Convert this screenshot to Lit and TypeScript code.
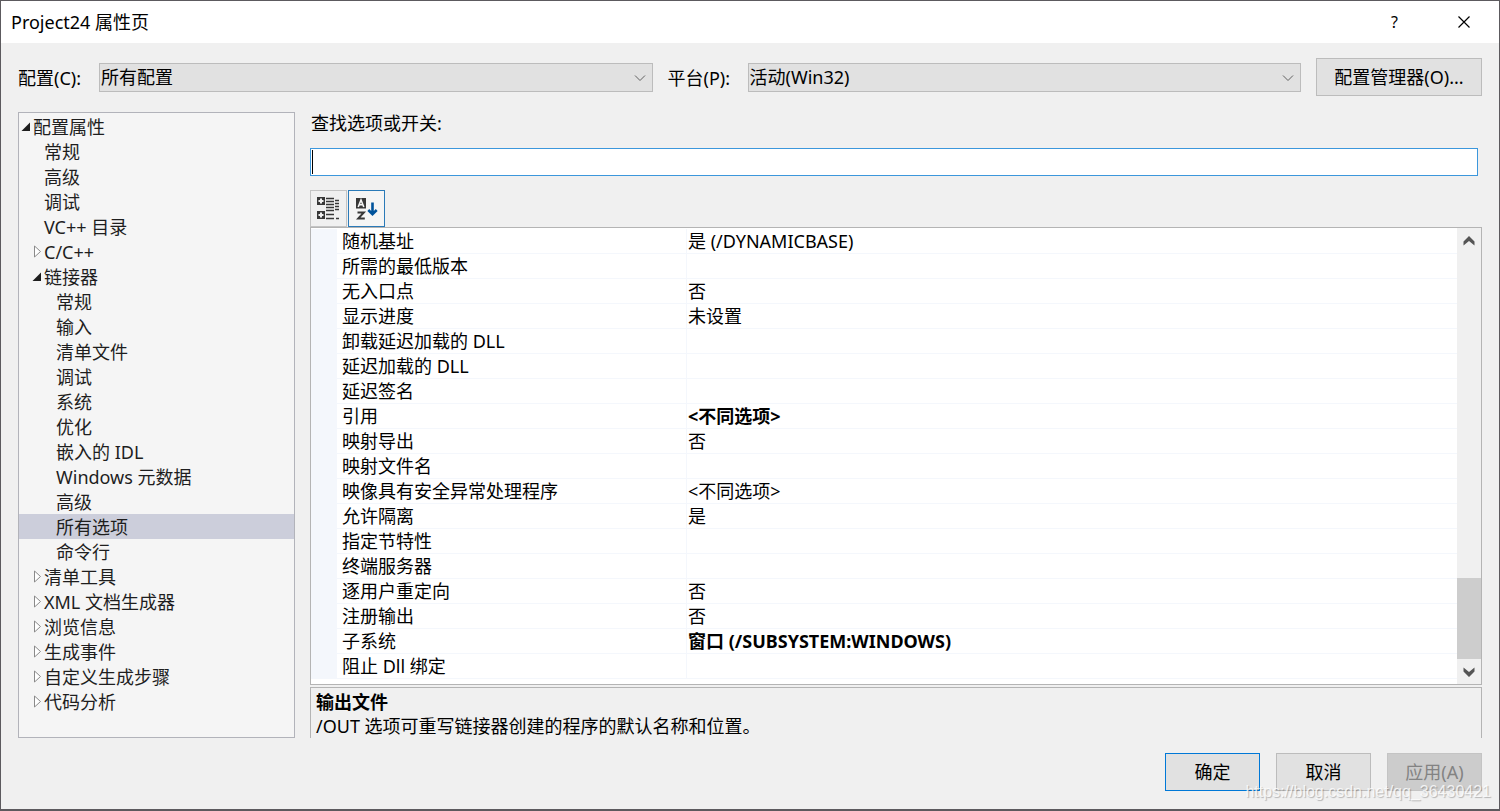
import { LitElement, html, css, svg, nothing } from "lit";
import { customElement, property, state } from "lit/decorators.js";
import { classMap } from "lit/directives/class-map.js";

interface TreeNode {
  label: string;
  children?: TreeNode[];
  open?: boolean;
}

interface Row {
  name: string;
  value: string;
  bold?: boolean;
}

const TREE: TreeNode = {
  label: "配置属性",
  open: true,
  children: [
    { label: "常规" },
    { label: "高级" },
    { label: "调试" },
    { label: "VC++ 目录" },
    { label: "C/C++", children: [] },
    {
      label: "链接器",
      open: true,
      children: [
        { label: "常规" },
        { label: "输入" },
        { label: "清单文件" },
        { label: "调试" },
        { label: "系统" },
        { label: "优化" },
        { label: "嵌入的 IDL" },
        { label: "Windows 元数据" },
        { label: "高级" },
        { label: "所有选项" },
        { label: "命令行" },
      ],
    },
    { label: "清单工具", children: [] },
    { label: "XML 文档生成器", children: [] },
    { label: "浏览信息", children: [] },
    { label: "生成事件", children: [] },
    { label: "自定义生成步骤", children: [] },
    { label: "代码分析", children: [] },
  ],
};

const ROWS: Row[] = [
  { name: "随机基址", value: "是 (/DYNAMICBASE)" },
  { name: "所需的最低版本", value: "" },
  { name: "无入口点", value: "否" },
  { name: "显示进度", value: "未设置" },
  { name: "卸载延迟加载的 DLL", value: "" },
  { name: "延迟加载的 DLL", value: "" },
  { name: "延迟签名", value: "" },
  { name: "引用", value: "<不同选项>", bold: true },
  { name: "映射导出", value: "否" },
  { name: "映射文件名", value: "" },
  { name: "映像具有安全异常处理程序", value: "<不同选项>" },
  { name: "允许隔离", value: "是" },
  { name: "指定节特性", value: "" },
  { name: "终端服务器", value: "" },
  { name: "逐用户重定向", value: "否" },
  { name: "注册输出", value: "否" },
  { name: "子系统", value: "窗口 (/SUBSYSTEM:WINDOWS)", bold: true },
  { name: "阻止 Dll 绑定", value: "" },
];

@customElement("option-tree")
export class OptionTree extends LitElement {
  static styles = css`
    :host {
      display: block;
      box-sizing: border-box;
      padding: 1px 0;
      border: 1px solid #b2b3ba;
      background: #f5f5f5;
    }
    ul {
      list-style: none;
      margin: 0;
      padding: 0;
    }
    .item {
      display: flex;
      align-items: center;
      width: 100%;
      height: 25px;
      padding: 0;
      border: 0;
      background: none;
      color: #1e1e1e;
      font: inherit;
      text-align: left;
      white-space: nowrap;
    }
    .level0 { padding-left: 2px; }
    .level1 { padding-left: 13px; }
    .level2 { padding-left: 25px; }
    .selected { background: #cccedb; }
    .arrow {
      flex: none;
      width: 12px;
      height: 14px;
    }
  `;

  @state() private selected = "链接器/所有选项";

  private arrow(node: TreeNode) {
    const shape = !node.children
      ? nothing
      : node.open
        ? svg`<path d="M9 2.5V11H0.5Z" fill="#1e1e1e" />`
        : svg`<path d="M2.5 1V12L8.5 6.500Z" fill="#fff" stroke="#8a8a8a" />`;
    return html`<svg class="arrow" viewBox="0 0 12 14" aria-hidden="true">${shape}</svg>`;
  }

  private node(node: TreeNode, level: number, parent: string): unknown {
    const key = `${parent}/${node.label}`;
    const isSelected = key === this.selected;
    return html`<li role="treeitem" aria-selected=${isSelected}>
      <button
        class=${classMap({ item: true, [`level${level}`]: true, selected: isSelected })}
        @click=${() => (this.selected = key)}
      >${this.arrow(node)}<span>${node.label}</span></button>
      ${node.open && node.children
        ? html`<ul role="group">${node.children.map((c) => this.node(c, level + 1, node.label))}</ul>`
        : nothing}
    </li>`;
  }

  render() {
    return html`<ul role="tree" aria-label="配置属性">${this.node(TREE, 0, "")}</ul>`;
  }
}

@customElement("combo-box")
export class ComboBox extends LitElement {
  static styles = css`
    :host { display: contents; }
    label { white-space: nowrap; }
    .box {
      display: grid;
      min-width: 0;
      align-items: center;
    }
    select, .chevron { grid-area: 1 / 1; }
    select {
      appearance: none;
      width: 100%;
      height: 29px;
      padding: 0 32px 0 1px;
      border: 1px solid #bcbcbc;
      border-radius: 0;
      background: #e1e1e1;
      color: #000;
      font: inherit;
      line-height: 27px;
    }
    .chevron {
      justify-self: end;
      width: 12px;
      height: 8px;
      margin-right: 7px;
      pointer-events: none;
    }
    label, .box { margin-top: 1px; }
  `;

  @property() label = "";
  @property() value = "";

  render() {
    return html`<label for="field">${this.label}</label>
      <div class="box">
        <select id="field"><option>${this.value}</option></select>
        <svg class="chevron" viewBox="0 0 12 8" aria-hidden="true">
          <path d="M1 1.5L6 6.5L11 1.5" fill="none" stroke="#606060" />
        </svg>
      </div>`;
  }
}

@customElement("property-grid")
export class PropertyGrid extends LitElement {
  static styles = css`
    :host {
      display: flex;
      border: 1px solid #b4b4b4;
      background: #fff;
    }
    .view {
      flex: 1;
      min-width: 0;
      padding: 1px 0 5px;
    }
    table {
      width: 100%;
      table-layout: fixed;
      border-collapse: separate;
      border-spacing: 0;
    }
    .gutter { width: 26px; background: #f4f7fc; }
    .name { width: 350px; }
    td, th {
      box-sizing: border-box;
      height: 25px;
      padding: 0;
      line-height: 24px;
      text-align: left;
      font-weight: 400;
      white-space: nowrap;
      overflow: hidden;
    }
    .cell { border-bottom: 1px solid #f4f7fc; }
    th.cell { padding-left: 5px; border-right: 1px solid #f4f7fc; }
    td.cell { padding-left: 1px; }
    td.bold { font-weight: 700; }
    .bar {
      display: flex;
      flex-direction: column;
      width: 24px;
      background: #f0f0f0;
    }
    .step {
      display: grid;
      place-items: center;
      height: 25px;
      padding: 0;
      border: 0;
      background: none;
    }
    .track {
      display: flex;
      flex: 1;
      flex-direction: column;
      justify-content: flex-end;
    }
    .thumb { height: 20%; background: #cdcdcd; }
  `;

  render() {
    return html`<div class="view">
        <table aria-label="所有选项">
          <colgroup><col class="gutter" /><col class="name" /><col /></colgroup>
          <tbody>
            ${ROWS.map((r) => html`<tr>
              <td class="gutter"></td>
              <th class="cell" scope="row">${r.name}</th>
              <td class=${classMap({ cell: true, bold: !!r.bold })}>${r.value}</td>
            </tr>`)}
          </tbody>
        </table>
      </div>
      <div class="bar">
        <button class="step" aria-label="向上滚动">
          <svg width="12" height="10" viewBox="0 0 12 10"><path d="M6 0L11.500 5.500V9.500L6 5L0.500 9.500V5.500Z" fill="#555" /></svg>
        </button>
        <div class="track"><div class="thumb"></div></div>
        <button class="step" aria-label="向下滚动">
          <svg width="12" height="10" viewBox="0 0 12 10"><path d="M6 10L11.500 4.500V0.500L6 5L0.500 0.500V4.500Z" fill="#555" /></svg>
        </button>
      </div>`;
  }
}

@customElement("app-root")
export class AppRoot extends LitElement {
  static styles = css`
    :host {
      display: flex;
      flex-direction: column;
      position: relative;
      box-sizing: border-box;
      min-height: 100vh;
      border: 1px solid #5c5a5e;
      border-bottom-width: 2px;
      background: #f0f0f0;
      color: #000;
      font: 18px/24px "Noto Sans", "Noto Sans CJK SC", sans-serif;
    }
    .title {
      display: flex;
      align-items: center;
      height: 42px;
      padding: 0 1px 0 10px;
      background: #fff;
    }
    h1 {
      flex: 1;
      margin: 0;
      font-size: 18px;
      font-weight: 400;
    }
    .caption {
      display: grid;
      place-items: center;
      width: 69px;
      height: 42px;
      padding: 0;
      border: 0;
      background: none;
      color: #000;
      font: inherit;
      font-size: 16px;
    }
    .config {
      display: grid;
      grid-template-columns: 66px minmax(0, 1fr) 65px minmax(0, 1fr) 166px;
      align-items: center;
      gap: 15px;
      padding: 15px 17px 16px;
    }
    .button {
      box-sizing: border-box;
      height: 38px;
      padding: 0;
      border: 1px solid #bcbcbc;
      background: #e1e1e1;
      color: #000;
      font: inherit;
    }
    .main {
      display: grid;
      grid-template-columns: 277px minmax(0, 1fr);
      gap: 15px;
      flex: 1;
      padding: 0 17px;
    }
    .right {
      display: flex;
      flex-direction: column;
    }
    .search-label {
      padding-left: 1px;
      line-height: 22px;
    }
    .search {
      display: grid;
      align-items: center;
      margin: 14px 4px 14px 0;
    }
    .search input, .caret { grid-area: 1 / 1; }
    .search input {
      box-sizing: border-box;
      width: 100%;
      height: 28px;
      padding: 0 3px;
      border: 1px solid #3c97dc;
      outline: 0;
      background: #fff;
      font: inherit;
    }
    .caret {
      width: 1px;
      height: 24px;
      margin-left: 2px;
      background: #000;
      pointer-events: none;
    }
    .tools {
      display: flex;
      gap: 1px;
    }
    .tool {
      display: grid;
      place-items: center;
      box-sizing: border-box;
      width: 37px;
      height: 37px;
      padding: 0;
      border: 1px solid #c4c4c4;
      background: #f0f0f0;
    }
    .tool.on {
      border-color: #2a7ab8;
      background: #f5f5f5;
    }
    .help {
      flex: 1;
      box-sizing: border-box;
      margin-top: 2px;
      padding: 2px 5px 0;
      border: solid #b4b4b4;
      border-width: 1px 1px 0;
    }
    .help h2, .help p {
      margin: 0;
      font-size: 18px;
    }
    .help h2 { font-weight: 700; }
    footer {
      display: flex;
      justify-content: flex-end;
      gap: 16px;
      padding: 15px 17px 18px;
    }
    footer .button { width: 95px; }
    footer .primary { border-color: #0078d7; }
    .button:disabled {
      border-color: #c4c4c4;
      background: #cccccc;
      color: #838383;
    }
    .mark {
      position: absolute;
      right: 8px;
      bottom: 7px;
      color: rgba(255, 255, 255, 0.8);
      font: 16px/20px "Liberation Sans", sans-serif;
      text-shadow: 1px 1px 1px rgba(0, 0, 0, 0.25);
      pointer-events: none;
    }
  `;

  @state() private sorted = true;

  render() {
    return html`
      <header class="title">
        <h1>Project24 属性页</h1>
        <button class="caption" aria-label="帮助">?</button>
        <button class="caption" aria-label="关闭">
          <svg width="12" height="12" viewBox="0 0 12 12"><path d="M0.5 0.5L11.5 11.5M11.5 0.5L0.5 11.5" stroke="#000" stroke-width="1.2" /></svg>
        </button>
      </header>
      <section class="config">
        <combo-box label="配置(C):" value="所有配置"></combo-box>
        <combo-box label="平台(P):" value="活动(Win32)"></combo-box>
        <button class="button">配置管理器(O)...</button>
      </section>
      <main class="main">
        <option-tree></option-tree>
        <div class="right">
          <label class="search-label" for="search">查找选项或开关:</label>
          <div class="search">
            <input id="search" type="text" />
            <span class="caret"></span>
          </div>
          <div class="tools">
            <button
              class=${classMap({ tool: true, on: !this.sorted })}
              aria-label="按类别排序"
              @click=${() => (this.sorted = false)}
            >
              <svg width="23" height="23" viewBox="0 0 23 23">
                <path fill="#383838" fill-rule="evenodd" d="M0 0H8V8H0ZM3 1.5V3H1.5V5H3V6.500H5V5H6.500V3H5V1.500ZM0 14H8V22H0ZM3 15.500V17H1.500V19H3V20.500H5V19H6.500V17H5V15.500Z" />
                <path stroke="#383838" stroke-width="1.300" d="M9 1.500H17M9 4.500H17M9 7.500H17M9 10.500H17M9 13.500H17M9 17.500H17M9 21.500H17M18 3.500H22M18 6.500H22M18 9.500H22M18 12.500H22M19 21.500H22" />
              </svg>
            </button>
            <button
              class=${classMap({ tool: true, on: this.sorted })}
              aria-label="按字母顺序排序"
              @click=${() => (this.sorted = true)}
            >
              <svg width="22" height="22" viewBox="0 0 22 22">
                <path fill="#383838" d="M0 0H10V10.500H0Z" />
                <path fill="none" stroke="#f5f5f5" stroke-width="1.600" d="M2.200 9L5 2L7.800 9M3.200 6.800H6.800" />
                <path fill="none" stroke="#383838" stroke-width="2" d="M1.500 14.500H7.800L2.200 20.500H8.800" />
                <path fill="none" stroke="#00539c" stroke-width="2.600" d="M16.500 4.500V16.500M12.300 12L16.500 16.200L20.700 12" />
              </svg>
            </button>
          </div>
          <property-grid></property-grid>
          <section class="help">
            <h2>输出文件</h2>
            <p>/OUT 选项可重写链接器创建的程序的默认名称和位置。</p>
          </section>
        </div>
      </main>
      <footer>
        <button class="button primary">确定</button>
        <button class="button">取消</button>
        <button class="button" disabled>应用(A)</button>
      </footer>
      <span class="mark">https://blog.csdn.net/qq_36430421</span>
    `;
  }
}
